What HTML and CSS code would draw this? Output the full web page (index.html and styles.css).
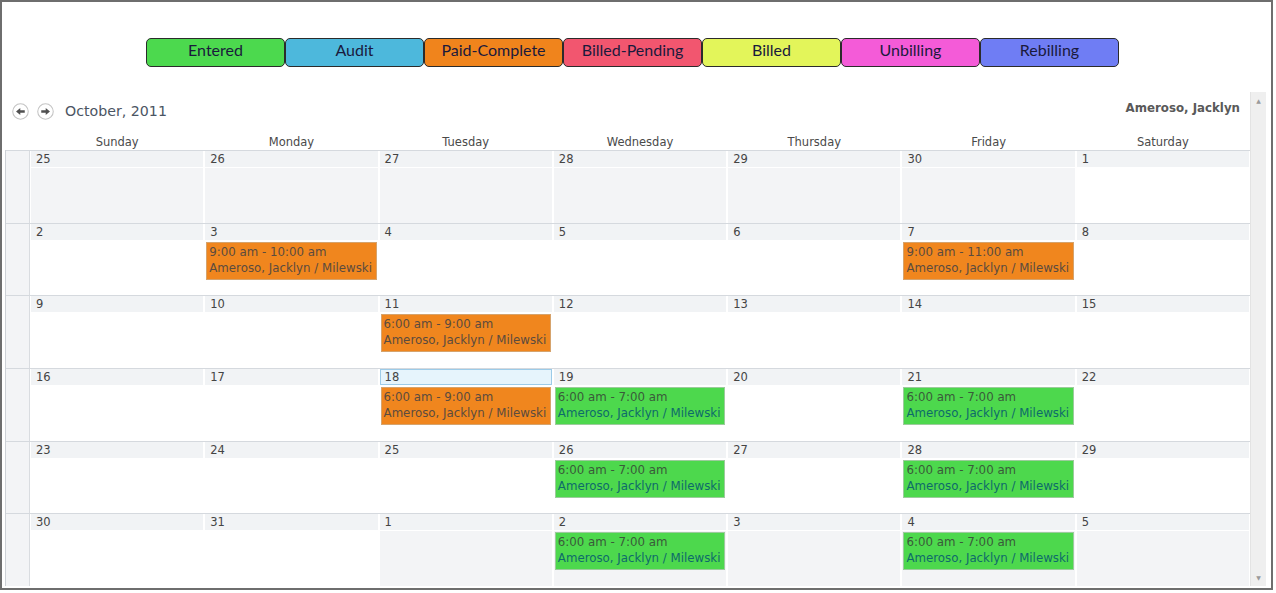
FILE: index.html
```html
<!DOCTYPE html>
<html>
<head>
<meta charset="utf-8">
<title>Calendar</title>
<link rel="stylesheet" href="styles.css">
</head>
<body>
<div class="frame">
  <div class="legend">
    <div class="lg entered">Entered</div>
    <div class="lg audit">Audit</div>
    <div class="lg paid">Paid-Complete</div>
    <div class="lg pending">Billed-Pending</div>
    <div class="lg billed">Billed</div>
    <div class="lg unbilling">Unbilling</div>
    <div class="lg rebilling">Rebilling</div>
  </div>
  <div class="cal">
    <div class="cal-main">
      <div class="cal-head">
        <div class="nav">
          <svg width="17" height="17" viewBox="0 0 16 16"><circle cx="8" cy="8" r="7.3" fill="#fff" stroke="#c4c4c4" stroke-width="1"/><path d="M3.8 8 L7.8 4.6 L7.8 6.8 L12 6.8 L12 9.2 L7.8 9.2 L7.8 11.4 Z" fill="#505050"/></svg>
          <svg width="17" height="17" viewBox="0 0 16 16"><circle cx="8" cy="8" r="7.3" fill="#fff" stroke="#c4c4c4" stroke-width="1"/><path d="M12.2 8 L8.2 4.6 L8.2 6.8 L4 6.8 L4 9.2 L8.2 9.2 L8.2 11.4 Z" fill="#505050"/></svg>
        </div>
        <div class="title">October, 2011</div>
        <div class="owner">Ameroso, Jacklyn</div>
      </div>
      <div class="days">
        <div></div>
        <div>Sunday</div><div>Monday</div><div>Tuesday</div><div>Wednesday</div><div>Thursday</div><div>Friday</div><div>Saturday</div>
      </div>
      <div class="grid">
        <div class="week">
          <div class="gut"></div>
          <div class="cell out"><div class="num">25</div><div class="body"></div></div>
          <div class="cell out"><div class="num">26</div><div class="body"></div></div>
          <div class="cell out"><div class="num">27</div><div class="body"></div></div>
          <div class="cell out"><div class="num">28</div><div class="body"></div></div>
          <div class="cell out"><div class="num">29</div><div class="body"></div></div>
          <div class="cell out"><div class="num">30</div><div class="body"></div></div>
          <div class="cell"><div class="num">1</div><div class="body"></div></div>
        </div>
        <div class="week">
          <div class="gut"></div>
          <div class="cell"><div class="num">2</div><div class="body"></div></div>
          <div class="cell"><div class="num">3</div><div class="body"><div class="ev o"><div class="t">9:00 am - 10:00 am</div><div class="n">Ameroso, Jacklyn / Milewski</div></div></div></div>
          <div class="cell"><div class="num">4</div><div class="body"></div></div>
          <div class="cell"><div class="num">5</div><div class="body"></div></div>
          <div class="cell"><div class="num">6</div><div class="body"></div></div>
          <div class="cell"><div class="num">7</div><div class="body"><div class="ev o"><div class="t">9:00 am - 11:00 am</div><div class="n">Ameroso, Jacklyn / Milewski</div></div></div></div>
          <div class="cell"><div class="num">8</div><div class="body"></div></div>
        </div>
        <div class="week">
          <div class="gut"></div>
          <div class="cell"><div class="num">9</div><div class="body"></div></div>
          <div class="cell"><div class="num">10</div><div class="body"></div></div>
          <div class="cell"><div class="num">11</div><div class="body"><div class="ev o"><div class="t">6:00 am - 9:00 am</div><div class="n">Ameroso, Jacklyn / Milewski</div></div></div></div>
          <div class="cell"><div class="num">12</div><div class="body"></div></div>
          <div class="cell"><div class="num">13</div><div class="body"></div></div>
          <div class="cell"><div class="num">14</div><div class="body"></div></div>
          <div class="cell"><div class="num">15</div><div class="body"></div></div>
        </div>
        <div class="week">
          <div class="gut"></div>
          <div class="cell"><div class="num">16</div><div class="body"></div></div>
          <div class="cell"><div class="num">17</div><div class="body"></div></div>
          <div class="cell today"><div class="num">18</div><div class="body"><div class="ev o"><div class="t">6:00 am - 9:00 am</div><div class="n">Ameroso, Jacklyn / Milewski</div></div></div></div>
          <div class="cell"><div class="num">19</div><div class="body"><div class="ev g"><div class="t">6:00 am - 7:00 am</div><div class="n">Ameroso, Jacklyn / Milewski</div></div></div></div>
          <div class="cell"><div class="num">20</div><div class="body"></div></div>
          <div class="cell"><div class="num">21</div><div class="body"><div class="ev g"><div class="t">6:00 am - 7:00 am</div><div class="n">Ameroso, Jacklyn / Milewski</div></div></div></div>
          <div class="cell"><div class="num">22</div><div class="body"></div></div>
        </div>
        <div class="week">
          <div class="gut"></div>
          <div class="cell"><div class="num">23</div><div class="body"></div></div>
          <div class="cell"><div class="num">24</div><div class="body"></div></div>
          <div class="cell"><div class="num">25</div><div class="body"></div></div>
          <div class="cell"><div class="num">26</div><div class="body"><div class="ev g"><div class="t">6:00 am - 7:00 am</div><div class="n">Ameroso, Jacklyn / Milewski</div></div></div></div>
          <div class="cell"><div class="num">27</div><div class="body"></div></div>
          <div class="cell"><div class="num">28</div><div class="body"><div class="ev g"><div class="t">6:00 am - 7:00 am</div><div class="n">Ameroso, Jacklyn / Milewski</div></div></div></div>
          <div class="cell"><div class="num">29</div><div class="body"></div></div>
        </div>
        <div class="week">
          <div class="gut"></div>
          <div class="cell"><div class="num">30</div><div class="body"></div></div>
          <div class="cell"><div class="num">31</div><div class="body"></div></div>
          <div class="cell out"><div class="num">1</div><div class="body"></div></div>
          <div class="cell out"><div class="num">2</div><div class="body"><div class="ev g"><div class="t">6:00 am - 7:00 am</div><div class="n">Ameroso, Jacklyn / Milewski</div></div></div></div>
          <div class="cell out"><div class="num">3</div><div class="body"></div></div>
          <div class="cell out"><div class="num">4</div><div class="body"><div class="ev g"><div class="t">6:00 am - 7:00 am</div><div class="n">Ameroso, Jacklyn / Milewski</div></div></div></div>
          <div class="cell out"><div class="num">5</div><div class="body"></div></div>
        </div>
      </div>
    </div>
    <div class="scroll"><span class="arr">&#9650;</span><span class="arr">&#9660;</span></div>
  </div>
</div>
</body>
</html>
```
FILE: styles.css
```css
html, body {
  margin: 0;
  padding: 0;
  background: #fff;
}
body {
  font-family: "DejaVu Sans", Verdana, sans-serif;
  color: #444;
}
.frame {
  width: 1273px;
  height: 590px;
  box-sizing: border-box;
  border: 2px solid #6e6e6e;
  display: flex;
  flex-direction: column;
}
.legend {
  display: flex;
  margin-top: 36px;
  padding-left: 144px;
  height: 29px;
}
.lg {
  width: 139px;
  height: 29px;
  box-sizing: border-box;
  border: 1px solid #2b2b2b;
  border-radius: 5px;
  text-align: center;
  line-height: 22px;
  font-family: Lato, "Open Sans", sans-serif;
  font-size: 16px;
  color: #1a1a3c;
}
.entered { background: #4cd94e; }
.audit { background: #4db8dc; }
.paid { background: #f0841c; }
.pending { background: #f2566f; }
.billed { background: #e3f55a; }
.unbilling { background: #f45bd8; }
.rebilling { background: #6f7df4; }

.cal {
  display: flex;
  margin-top: 25px;
  flex: 1;
}
.cal-main {
  width: 1248px;
  display: flex;
  flex-direction: column;
}
.cal-head {
  height: 38px;
  display: flex;
  align-items: center;
}
.nav {
  display: flex;
  gap: 8px;
  padding-left: 10px;
}
.nav svg { display: block; }
.title {
  margin-left: 11px;
  font-size: 14.2px;
  color: #4b5563;
  margin-top: -1px;
}
.owner {
  margin-left: auto;
  padding-right: 10px;
  align-self: flex-start;
  margin-top: 9px;
  font-size: 11.8px;
  font-weight: bold;
  color: #595959;
  line-height: 14px;
}
.days {
  display: grid;
  grid-template-columns: 25px repeat(7, 1fr);
  margin-left: 3px;
  height: 20px;
  line-height: 20px;
  padding-top: 2px;
  box-sizing: border-box;
  font-size: 11.5px;
  color: #4a4a4a;
  text-align: center;
}
.grid {
  margin-left: 3px;
  height: 436px;
  display: grid;
  grid-template-rows: repeat(6, 1fr);
  border-left: 1px solid #cdd1d6;
}
.week {
  display: grid;
  grid-template-columns: 24px repeat(7, 1fr);
  border-top: 1px solid #d5d9de;
  min-height: 0;
}
.gut {
  background: #f3f4f6;
  border-right: 1px solid #d9dce0;
}
.cell {
  display: flex;
  flex-direction: column;
  padding: 0 1px;
  min-width: 0;
}
.num {
  height: 16px;
  box-sizing: border-box;
  background: #f1f3f5;
  font-size: 11.5px;
  line-height: 16px;
  padding-left: 5px;
  color: #444;
  margin-bottom: 1px;
}
.today .num {
  background: #e6f4fc;
  border: 1px solid #9ccbe8;
  line-height: 14px;
  padding-left: 4px;
}
.body {
  flex: 1;
  background: #fff;
}
.out .body {
  background: #f3f4f6;
}
.ev {
  margin: 1px 1px 0;
  height: 38px;
  box-sizing: border-box;
  padding: 1px 2px;
  border: 1px solid;
  font-size: 11.8px;
  line-height: 16px;
  white-space: nowrap;
  overflow: hidden;
}
.ev.o {
  background: #f0861e;
  border-color: #d6a36c;
  color: #5b4b3e;
}
.ev.g {
  background: #4dd84d;
  border-color: #9ccb9c;
}
.ev.g .t { color: #3a5a3a; }
.ev.g .n { color: #0e6b6a; }

.scroll {
  width: 16px;
  height: 494px;
  box-sizing: border-box;
  background: #efefef;
  border-left: 1px solid #e3e3e3;
  display: flex;
  flex-direction: column;
  justify-content: space-between;
  align-items: center;
  padding: 5px 0 4px;
}
.arr {
  font-size: 6px;
  line-height: 8px;
  color: #9a9a9a;
}
```
